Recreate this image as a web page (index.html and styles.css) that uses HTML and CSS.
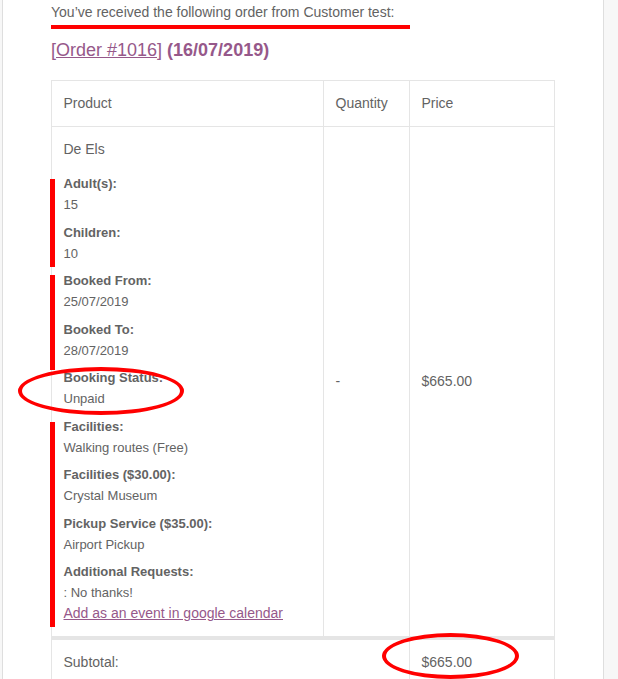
FILE: index.html
```html
<!DOCTYPE html>
<html lang="en">
<head>
<meta charset="utf-8">
<title>New order</title>
<link rel="stylesheet" href="styles.css">
</head>
<body>
<div class="wrap">
  <p class="intro">You’ve received the following order from Customer test:</p>
  <h2 class="order-title"><a href="#" class="order-link">[Order #1016]</a> (16/07/2019)</h2>
  <table class="order">
    <colgroup><col class="c1"><col class="c2"><col class="c3"></colgroup>
    <thead>
      <tr><th>Product</th><th>Quantity</th><th>Price</th></tr>
    </thead>
    <tbody>
      <tr>
        <td class="product">De Els
          <ul class="meta">
            <li><strong>Adult(s):</strong><p>15</p></li>
            <li><strong>Children:</strong><p>10</p></li>
            <li><strong>Booked From:</strong><p>25/07/2019</p></li>
            <li><strong>Booked To:</strong><p>28/07/2019</p></li>
            <li><strong>Booking Status:</strong><p>Unpaid</p></li>
            <li><strong>Facilities:</strong><p>Walking routes (Free)</p></li>
            <li><strong>Facilities ($30.00):</strong><p>Crystal Museum</p></li>
            <li><strong>Pickup Service ($35.00):</strong><p>Airport Pickup</p></li>
            <li><strong>Additional Requests:</strong><p>: No thanks!</p></li>
          </ul>
          <a href="#" class="cal-link">Add as an event in google calendar</a>
        </td>
        <td>-</td>
        <td>$665.00</td>
      </tr>
    </tbody>
    <tfoot>
      <tr><th colspan="2">Subtotal:</th><td>$665.00</td></tr>
    </tfoot>
  </table>

  <div class="mark-line"></div>
  <div class="mark-bar bar1"></div>
  <div class="mark-bar bar2"></div>
  <div class="mark-bar bar3"></div>
  <div class="mark-ellipse ell1"></div>
  <div class="mark-ellipse ell2"></div>
</div>
</body>
</html>
```
FILE: styles.css
```css
html, body {
  margin: 0;
  padding: 0;
  background: #f7f7f7;
}
body {
  font-family: "Liberation Sans", Arial, Helvetica, sans-serif;
  color: #636363;
  font-size: 14px;
  line-height: 150%;
}
.wrap {
  position: relative;
  margin-left: 2px;
  width: 504px;
  padding: 2px 48px 40px;
  background: #fff;
  border-left: 1px solid #dedede;
  border-right: 1px solid #dedede;
}
.intro {
  margin: 0 0 16px;
}
.order-title {
  margin: 0 0 18px;
  color: #96588a;
  font-size: 18px;
  font-weight: bold;
  line-height: 130%;
}
.order-link {
  color: #96588a;
  font-weight: normal;
  text-decoration: underline;
}
.order {
  width: 503px;
  border-collapse: collapse;
  table-layout: fixed;
  border: 1px solid #e5e5e5;
}
.c1 { width: 272px; }
.c2 { width: 86px; }
.c3 { width: 145px; }
.order th,
.order td {
  border: 1px solid #e5e5e5;
  padding: 12px 12px 12px 11.5px;
  text-align: left;
  vertical-align: middle;
  font-weight: normal;
  color: #636363;
}
.order tfoot tr:first-child th,
.order tfoot tr:first-child td {
  border-top-width: 4px;
}
.meta {
  list-style: none;
  margin: 14px 0 0;
  padding: 0;
  font-size: 13px;
}
.meta li {
  margin: 0 0 7.5px;
  padding: 0;
}
.meta li:last-child {
  margin-bottom: 0;
}
.meta strong {
  display: block;
  line-height: 20px;
  font-weight: bold;
}
.meta p {
  margin: 1px 0 0;
  line-height: 20px;
}
.cal-link {
  display: block;
  color: #96588a;
  text-decoration: underline;
  line-height: 21px;
}

/* annotations */
.mark-line {
  position: absolute;
  left: 48px;
  top: 25px;
  width: 359px;
  height: 4px;
  background: #ff0000;
}
.mark-bar {
  position: absolute;
  left: 47px;
  width: 5px;
  background: #ff0000;
}
.bar1 { top: 179px; height: 88px; }
.bar2 { top: 275px; height: 95px; }
.bar3 { top: 422px; height: 205px; }
.mark-ellipse {
  position: absolute;
  box-sizing: border-box;
  border: 4px solid #ff0000;
  border-radius: 50%;
}
.ell1 { left: 15px; top: 367px; width: 166px; height: 48px; }
.ell2 { left: 379px; top: 633px; width: 137px; height: 46px; }
```
